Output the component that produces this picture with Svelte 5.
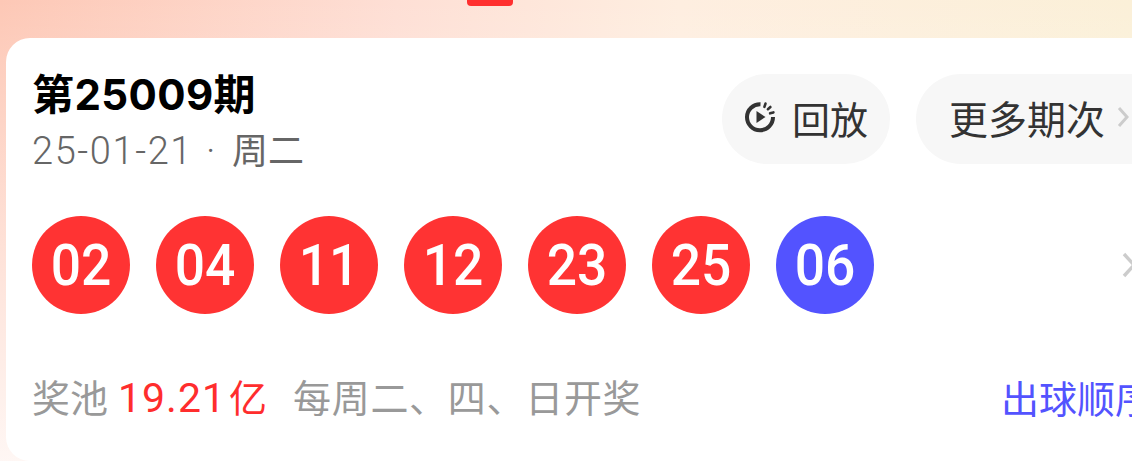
<script>
  const balls = [
    { n: '02', blue: false }, { n: '04', blue: false }, { n: '11', blue: false },
    { n: '12', blue: false }, { n: '23', blue: false }, { n: '25', blue: false },
    { n: '06', blue: true }
  ];
</script>

<div class="page">
  <div class="tab"></div>
  <section class="card">
    <header class="head">
      <div class="info">
        <h1>第25009期</h1>
        <p class="date">25-01-21<span class="dot">·</span><span class="week">周二</span></p>
      </div>
      <div class="actions">
        <div class="btn replay">
          <svg class="play" viewBox="0 0 32 32" width="32" height="32" aria-hidden="true">
            <path d="M16.5 3.2A13 13 0 1 0 29 16" fill="none" stroke="#333" stroke-width="4"/>
            <path d="M21.5 2.6l-1.1 3.2M26.4 6l-2.5 2.2M29.4 11.4l-3.3 .9" fill="none" stroke="#333" stroke-width="2.6" stroke-linecap="round"/>
            <path d="M12.5 10l9 6-9 6z" fill="#333"/>
          </svg>
          <span>回放</span>
        </div>
        <div class="btn more">
          <span>更多期次</span>
          <svg class="chev small" viewBox="0 0 12 22" aria-hidden="true"><path d="M2 2l8 9-8 9" fill="none" stroke="#ccc" stroke-width="3"/></svg>
        </div>
      </div>
    </header>
    <div class="row">
      <div class="balls">
        {#each balls as b}
          <div class="ball" class:blue={b.blue}><span>{b.n}</span></div>
        {/each}
      </div>
      <svg class="chev big" viewBox="0 0 14 26" aria-hidden="true"><path d="M2 2l10 11-10 11" fill="none" stroke="#ccc" stroke-width="3.4"/></svg>
    </div>
    <footer class="foot">
      <div class="pool">
        <span>奖池</span>
        <span class="amount">19.21<span class="unit">亿</span></span>
        <span class="sched">每周二、四、日开奖</span>
      </div>
      <span class="order">出球顺序</span>
    </footer>
  </section>
</div>

<style>
  :global(body) { margin: 0; background: #fff; }
  .page {
    position: relative;
    width: 1132px;
    height: 461px;
    overflow: hidden;
    box-sizing: border-box;
    padding: 38px 0 0 6px;
    font-family: "Noto Sans CJK SC", "Noto Sans", sans-serif;
    background:
      linear-gradient(to bottom, rgba(255,255,255,0) 0, rgba(255,255,255,.85) 100%),
      linear-gradient(to right, #fdc8b6 0, #fedfd5 35%, #feeee0 60%, #fbf0d8 100%);
  }
  .tab {
    position: absolute;
    left: 467px;
    top: 0;
    width: 46px;
    height: 6px;
    background: #ff2f2f;
    border-radius: 0 0 4px 4px;
  }
  .card {
    width: 1170px;
    height: 423px;
    box-sizing: border-box;
    background: #fff;
    border-radius: 24px;
    padding: 28px 0 0 26px;
  }
  .head { display: flex; justify-content: space-between; height: 150px; }
  h1 {
    margin: 0;
    font-family: Inter, "Noto Sans CJK SC", sans-serif;
    font-size: 42px;
    line-height: 58px;
    font-weight: 700;
    letter-spacing: 0.4px;
    color: #000;
  }
  .date {
    margin: 0;
    font-family: Roboto, "Noto Sans CJK SC", sans-serif;
    font-size: 38px;
    line-height: 48px;
    font-weight: 300;
    color: #666;
    letter-spacing: 1.6px;
  }
  .dot { margin: 0 15px 0 13px; }
  .week { font-family: "Noto Sans CJK SC", sans-serif; font-size: 36px; letter-spacing: 0; font-weight: 400; }
  .actions { display: flex; gap: 26px; padding: 8px 0 0; }
  .btn {
    height: 90px;
    border-radius: 45px;
    background: #f7f7f7;
    display: flex;
    align-items: center;
    font-size: 38px;
    color: #333;
    box-sizing: border-box;
    padding-bottom: 4px;
  }
  .replay { width: 168px; padding-left: 22px; gap: 16px; }
  .more { width: 260px; padding-left: 33px; gap: 12px; font-size: 39px; }
  .chev.small { width: 12px; height: 22px; }
  .row { display: flex; justify-content: space-between; align-items: center; height: 98px; padding-right: 40px; }
  .balls { display: flex; gap: 26px; }
  .ball {
    width: 98px;
    height: 98px;
    border-radius: 50%;
    background: #ff3333;
    color: #fff;
    display: flex;
    align-items: center;
    justify-content: center;
    font-family: Roboto, sans-serif;
    font-size: 58px;
    font-weight: 500;
  }
  .ball span { display: block; transform: scaleX(.92); }
  .ball.blue { background: #5353ff; }
  .chev.big { width: 14px; height: 26px; }
  .foot {
    display: flex;
    justify-content: space-between;
    align-items: center;
    margin-top: 56px;
    padding-right: 23px;
    font-size: 38px;
    line-height: 52px;
    color: #999;
  }
  .pool { display: flex; gap: 10px; align-items: baseline; }
  .amount { color: #ff2d2d; font-family: Roboto, "Noto Sans CJK SC", sans-serif; font-size: 41px; letter-spacing: 1px; }
  .unit { font-family: "Noto Sans CJK SC", sans-serif; font-size: 38px; margin-left: 3px; letter-spacing: 0; }
  .sched { margin-left: 16px; letter-spacing: 0.7px; }
  .order { color: #5353ff; }
</style>
